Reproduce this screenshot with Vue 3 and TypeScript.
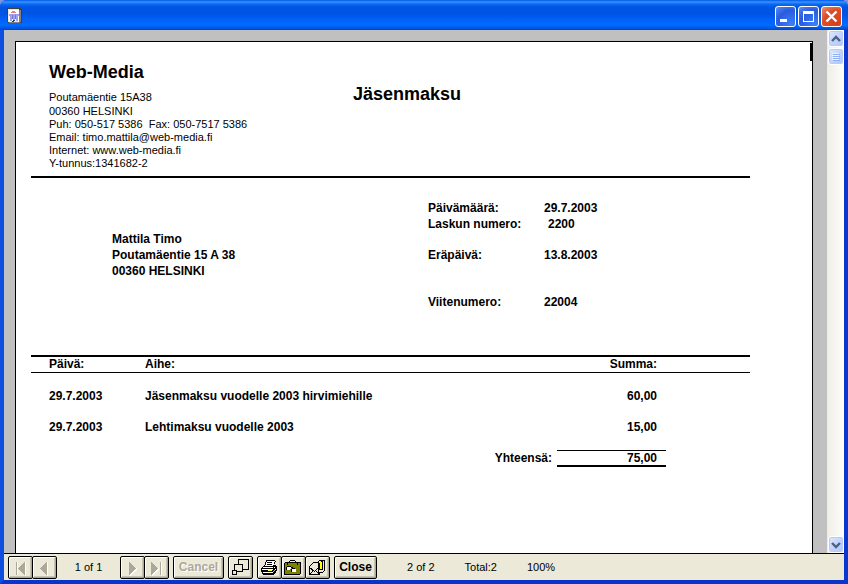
<script setup lang="ts">
import { ref } from 'vue'

interface InvoiceRow {
  date: string
  subject: string
  amount: string
}

const contactLines: string[] = [
  'Poutamäentie 15A38',
  '00360 HELSINKI',
  'Puh: 050-517 5386  Fax: 050-7517 5386',
  'Email: timo.mattila@web-media.fi',
  'Internet: www.web-media.fi',
  'Y-tunnus:1341682-2',
]

const recipient: string[] = ['Mattila Timo', 'Poutamäentie 15 A 38', '00360 HELSINKI']

const rows: InvoiceRow[] = [
  { date: '29.7.2003', subject: 'Jäsenmaksu vuodelle 2003 hirvimiehille', amount: '60,00' },
  { date: '29.7.2003', subject: 'Lehtimaksu vuodelle 2003', amount: '15,00' },
]

const total = ref('75,00')
</script>

<template>
  <div class="window">
    <header class="titlebar">
      <svg class="app-icon" width="16" height="16" viewBox="0 0 16 16" shape-rendering="crispEdges" aria-hidden="true">
        <path fill="#404040" d="M0 0h14v1h1v14h-14v-1h-1z" />
        <path fill="#ece9d8" d="M1 1h11v13h-11z" />
        <path fill="#808080" d="M12 2h2v12h-2zM2 14h11v1h-11z" />
        <path fill="#fff" d="M2 2h10v11h-10z" />
        <path fill="#f08080" d="M5 3h3v1h1v1h-5v-1h1z" />
        <path fill="#a0a0f0" d="M2 6h10v2h-10zM3 8h2v5h-2zM6 8h2v4h-2zM9 8h2v5h-2z" />
        <path fill="#7878d0" d="M5 7h1v4h-1zM8 7h1v4h-1z" />
        <path fill="#204080" d="M6 12h2v1h-1v1h-2v-1h1z" />
      </svg>
      <div class="captions">
        <button class="caption" type="button" aria-label="Minimize">
          <svg width="21" height="21" viewBox="0 0 21 21" shape-rendering="crispEdges"><path fill="#fff" d="M5 13h7v3h-7z" /></svg>
        </button>
        <button class="caption" type="button" aria-label="Maximize">
          <svg width="21" height="21" viewBox="0 0 21 21" shape-rendering="crispEdges"><path fill="#fff" fill-rule="evenodd" d="M5 5h11v11h-11zM6 8v7h9v-7z" /></svg>
        </button>
        <button class="caption danger" type="button" aria-label="Close window">
          <svg width="21" height="21" viewBox="0 0 21 21"><path stroke="#fff" stroke-width="2.4" d="M5.500 5.500l10 10M15.500 5.500l-10 10" /></svg>
        </button>
      </div>
    </header>

    <div class="frame">
      <div class="viewer">
        <main class="desk">
          <article class="paper">
            <span class="tab"></span>
            <section class="letterhead">
              <div>
                <h1>Web-Media</h1>
                <p class="contact">
                  <span v-for="line in contactLines" :key="line">{{ line }}</span>
                </p>
              </div>
              <h2>Jäsenmaksu</h2>
            </section>

            <section class="details">
              <p class="recipient">
                <span v-for="line in recipient" :key="line">{{ line }}</span>
              </p>
              <dl class="meta">
                <dt>Päivämäärä:</dt><dd>29.7.2003</dd>
                <dt>Laskun numero:</dt><dd class="indent">2200</dd>
                <dt class="due">Eräpäivä:</dt><dd class="due">13.8.2003</dd>
                <dt class="reference">Viitenumero:</dt><dd class="reference">22004</dd>
              </dl>
            </section>

            <table class="items">
              <colgroup><col class="c-date" /><col /><col class="c-sum" /><col class="c-rest" /></colgroup>
              <thead>
                <tr><th class="date">Päivä:</th><th>Aihe:</th><th class="sum">Summa:</th><td></td></tr>
              </thead>
              <tbody>
                <tr class="spacer"><td colspan="4"></td></tr>
                <tr v-for="row in rows" :key="row.subject">
                  <td class="date">{{ row.date }}</td>
                  <td>{{ row.subject }}</td>
                  <td class="sum">{{ row.amount }}</td>
                  <td></td>
                </tr>
              </tbody>
              <tfoot>
                <tr>
                  <th colspan="2" class="total-label">Yhteensä:</th>
                  <td><div class="total">{{ total }}</div></td>
                  <td></td>
                </tr>
              </tfoot>
            </table>
          </article>
        </main>

        <div class="scrollbar">
          <button type="button" aria-label="Scroll up">
            <svg width="14" height="14" viewBox="0 0 14 14"><path fill="none" stroke="#4d6185" stroke-width="2.4" d="M3 9l4-4 4 4" /></svg>
          </button>
          <button type="button" aria-label="Scroll position">
            <svg width="14" height="14" viewBox="0 0 14 14" shape-rendering="crispEdges">
              <path fill="#eef4fe" d="M3 3h7v1h-7zM3 5h7v1h-7zM3 7h7v1h-7zM3 9h7v1h-7z" />
              <path fill="#8cb0f8" d="M4 4h7v1h-7zM4 6h7v1h-7zM4 8h7v1h-7zM4 10h7v1h-7z" />
            </svg>
          </button>
          <button class="down" type="button" aria-label="Scroll down">
            <svg width="14" height="14" viewBox="0 0 14 14"><path fill="none" stroke="#4d6185" stroke-width="2.4" d="M3 5l4 4 4-4" /></svg>
          </button>
        </div>
      </div>

      <footer class="toolbar">
        <div class="group">
          <button class="tool" type="button" disabled aria-label="First page">
            <svg width="21" height="19" viewBox="0 0 21 19" shape-rendering="crispEdges">
              <path fill="#fff" d="M7 4h1v13h-1zM15 4h1v14h-1z" />
              <path fill="#aca899" d="M6 4h1v13h-1zM8 10h1v-1h1v-1h1v-1h1v-1h1v-1h1v-1h1v13h-1v-1h-1v-1h-1v-1h-1v-1h-1v-1h-1v-1h-1z" />
            </svg>
          </button>
          <button class="tool" type="button" disabled aria-label="Previous page">
            <svg width="21" height="19" viewBox="0 0 21 19" shape-rendering="crispEdges">
              <path fill="#fff" d="M13 4h1v14h-1z" />
              <path fill="#aca899" d="M6 10h1v-1h1v-1h1v-1h1v-1h1v-1h1v-1h1v13h-1v-1h-1v-1h-1v-1h-1v-1h-1v-1h-1v-1h-1z" />
            </svg>
          </button>
        </div>
        <span class="pages">1 of 1</span>
        <div class="group">
          <button class="tool" type="button" disabled aria-label="Next page">
            <svg width="21" height="19" viewBox="0 0 21 19" shape-rendering="crispEdges">
              <path fill="#fff" d="M15 11v1h-1v1h-1v1h-1v1h-1v1h-1v1h-1v1h-1v-2l6-6z" />
              <path fill="#aca899" d="M14 10h-1v-1h-1v-1h-1v-1h-1v-1h-1v-1h-1v-1h-1v13h1v-1h1v-1h1v-1h1v-1h1v-1h1v-1h1z" />
            </svg>
          </button>
          <button class="tool" type="button" disabled aria-label="Last page">
            <svg width="21" height="19" viewBox="0 0 21 19" shape-rendering="crispEdges">
              <path fill="#fff" d="M13 11v1h-1v1h-1v1h-1v1h-1v1h-1v1h-1v1h-1v-2l6-6zM15 4h1v13h-1z" />
              <path fill="#aca899" d="M12 10h-1v-1h-1v-1h-1v-1h-1v-1h-1v-1h-1v-1h-1v13h1v-1h1v-1h1v-1h1v-1h1v-1h1v-1h1zM14 4h1v13h-1z" />
            </svg>
          </button>
        </div>
        <button class="tool text cancel" type="button" disabled>Cancel</button>
        <button class="tool" type="button" aria-label="Zoom">
          <svg width="21" height="19" viewBox="0 0 21 19" shape-rendering="crispEdges">
            <g fill="#ece9d8" stroke="#000">
              <path d="M8.500 1.500h10v10h-10z" />
              <path d="M4.500 6.500h8v7h-8z" />
              <path d="M2.500 12.500h4v4h-4z" />
            </g>
          </svg>
        </button>
        <div class="group">
          <button class="tool" type="button" aria-label="Print">
            <svg width="21" height="19" viewBox="0 0 21 19" shape-rendering="crispEdges">
              <path fill="#000" d="M7 2h9v1h1v1h-1v2h-1v1h2v1h1v5h-1v2h-1v1h-1v1h-11v-1h-1v-2h-1v-4h1v-1h1v-1h1v-1h1v-3h1z" />
              <path fill="#fff" d="M8 3h8l-2 5h-8z" />
              <path fill="#000" d="M8 4h5v1h-5zM8 6h5v1h-5z" />
              <path fill="#fff" d="M4 9h10v1h-10zM3 11h11v1h-11zM4 14h10v1h-10zM15 9h1v1h-1zM16 11h1v1h-1z" />
              <path fill="#ffff00" d="M9 12h4v1h-4z" />
              <path fill="#c0c0c0" d="M14 13h1v1h-1zM15 12h1v1h-1z" />
            </svg>
          </button>
          <button class="tool" type="button" aria-label="Export">
            <svg width="21" height="19" viewBox="0 0 21 19" shape-rendering="crispEdges">
              <path fill="#000" fill-rule="evenodd" d="M7 2h5v1h1v1h5v12h-1v1h-16v-12h1v-1h4v-1h1zM7 3v1h5v-1z" />
              <path fill="#808000" d="M2 5h15v11h-15z" />
              <path fill="#000" d="M4 5h1v2h-1zM14 5h1v2h-1zM4 8h4v1h-4zM3 9h1v3h-1zM8 9h2v1h-2zM8 11h1v3h-1zM9 10h3v1h-3z" />
              <path fill="#fff" d="M4 9h4v2h-1v1h-3zM9 11h4v3h-4z" />
            </svg>
          </button>
          <button class="tool" type="button" aria-label="Mail">
            <svg width="21" height="19" viewBox="0 0 21 19" shape-rendering="crispEdges">
              <path fill="#ece9d8" stroke="#000" d="M2.500 8.500l4-4h4l2 3v9h-10z" />
              <path fill="none" stroke="#000" d="M2.500 9.500l5 4 3-3M2.500 16.500l4-4M12.500 16.500l-4-4" />
              <path fill="#ece9d8" stroke="#000" d="M11.500 3.500l1-1h5v10l-2 2h-4z" />
              <path fill="none" stroke="#000" d="M12.500 4.500v7h3v-8h-2" />
              <path fill="#ffff00" d="M13 4h2v7h-2z" />
              <path fill="#ece9d8" d="M14 5h1v4h-1z" />
            </svg>
          </button>
        </div>
        <button class="tool text" type="button">Close</button>
        <div class="status">
          <span>2 of 2</span>
          <span>Total:2</span>
          <span>100%</span>
        </div>
      </footer>
    </div>
  </div>
</template>

<style>
body {
  background: #7b96df;
}
</style>

<style scoped>
* {
  box-sizing: border-box;
}

.window {
  display: flex;
  flex-direction: column;
  height: 100vh;
  overflow: hidden;
  border-radius: 7px 7px 0 0;
  background: #0831d9;
  font-family: "Liberation Sans", Arial, sans-serif;
  font-size: 12px;
  color: #000;
}

h1, h2, p, dl, dd {
  margin: 0;
}

button {
  padding: 0;
  font: inherit;
}

svg {
  display: block;
  flex: none;
}

.titlebar {
  display: flex;
  flex: none;
  align-items: center;
  justify-content: space-between;
  height: 30px;
  padding: 2px 6px 0 7px;
  background: linear-gradient(#0058e6 0, #3a93ff 2px, #0a6cf5 4px, #0055e5 7px, #0054e3 14px, #0062fa 20px, #006bff 25px, #0058e8 28px, #0042cc 30px);
}

.captions {
  display: flex;
  gap: 2px;
}

.caption {
  width: 21px;
  height: 21px;
  border: 1px solid #fff;
  border-radius: 3px;
  background: radial-gradient(circle at 80% 90%, #3c80f8, #2a5be0 60%, #5c8df0);
  overflow: hidden;
}

.caption svg {
  margin: -1px;
}

.caption.danger {
  background: radial-gradient(circle at 80% 90%, #d8401a, #dd4c28 60%, #f09078);
}

.frame {
  display: flex;
  flex: 1;
  flex-direction: column;
  min-height: 0;
  border: solid #0831d9;
  border-width: 0 4px 4px;
  border-color: #0d4fe0 #0838d0 #0a34cc #0d4fe0;
}

.viewer {
  display: flex;
  flex: 1;
  min-height: 0;
}

.desk {
  flex: 1;
  min-width: 0;
  padding: 11px 14px 0 11px;
  overflow: hidden;
  background: #c0c0c0;
}

.paper {
  position: relative;
  height: 100%;
  padding: 20px 62px 0 15px;
  border: 1px solid #000;
  border-bottom: 0;
  background: #fff;
  font-weight: bold;
}

.tab {
  position: absolute;
  top: 1px;
  right: -1px;
  width: 3px;
  height: 18px;
  background: #000;
}

.letterhead {
  display: grid;
  grid-template-columns: 304px 1fr;
  padding: 0 0 6px 18px;
  border-bottom: 2px solid #000;
}

h1, h2 {
  font-size: 18px;
  line-height: 20px;
}

h2 {
  padding-top: 22px;
}

.contact {
  display: flex;
  flex-direction: column;
  margin-top: 8px;
  font-size: 11px;
  font-weight: normal;
  line-height: 13px;
  white-space: pre;
}

.contact span:first-child {
  line-height: 15px;
}

.details {
  display: grid;
  grid-template-columns: 316px 1fr;
  padding: 22px 0 45px 81px;
  line-height: 16px;
}

.recipient {
  display: flex;
  flex-direction: column;
  padding-top: 31px;
}

.meta {
  display: grid;
  grid-template-columns: 116px 1fr;
}

.indent {
  padding-left: 4px;
}

.due {
  padding-top: 15px;
}

.reference {
  padding-top: 31px;
}

.items {
  width: 100%;
  border-collapse: separate;
  border-spacing: 0;
  table-layout: fixed;
  line-height: 15px;
}

.c-date {
  width: 114px;
}

.c-sum {
  width: 109px;
}

.c-rest {
  width: 84px;
}

.items th, .items td {
  height: 31px;
  padding: 0;
  text-align: left;
}

.items thead th, .items thead td {
  height: 18px;
  border-top: 2px solid #000;
  border-bottom: 1px solid #000;
}

.items .spacer td {
  height: 8px;
}

.items .date {
  padding-left: 18px;
}

.items .sum {
  padding-right: 9px;
  text-align: right;
}

.items .total-label {
  padding-right: 5px;
  text-align: right;
}

.total {
  padding-right: 9px;
  border-top: 1px solid #000;
  border-bottom: 2px solid #000;
  line-height: 14px;
  text-align: right;
}

.scrollbar {
  display: flex;
  flex: none;
  flex-direction: column;
  gap: 1px;
  width: 17px;
  padding: 0 0 0 1px;
  background: linear-gradient(90deg, #eeede5, #fefefb);
}

.scrollbar button {
  width: 16px;
  height: 17px;
  border: 1px solid #fff;
  border-radius: 3px;
  background: linear-gradient(135deg, #e1eafe, #c3d3fd 50%, #aec8f7);
  box-shadow: inset 0 0 0 1px #b8cbf6;
}

.scrollbar .down {
  margin-top: auto;
}

.toolbar {
  display: flex;
  flex: none;
  align-items: center;
  gap: 4px;
  height: 27px;
  padding: 0 4px;
  border-top: 1px solid #000;
  background: #ece9d8;
}

.group {
  display: flex;
}

.group .tool + .tool {
  margin-left: -1px;
}

.tool {
  display: flex;
  align-items: center;
  justify-content: center;
  width: 25px;
  height: 23px;
  border: 1px solid #000;
  border-radius: 2px;
  background: #ece9d8;
  box-shadow: inset 1px 1px #fff, inset -1px -1px #aca899, inset -2px -2px #c8c4b4;
  color: #000;
}

.tool.text {
  width: 43px;
  font-weight: bold;
}

.tool.cancel {
  width: 51px;
  color: #aca899;
  text-shadow: 1px 1px #fff;
}

.pages {
  width: 55px;
  text-align: center;
  font-size: 11px;
}

.status {
  display: flex;
  gap: 30px;
  padding-left: 26px;
  font-size: 11px;
}
</style>
